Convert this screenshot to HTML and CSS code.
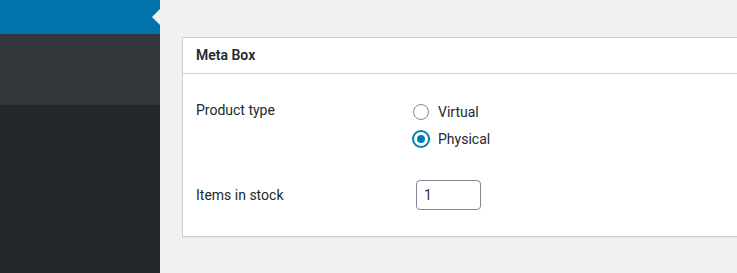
FILE: index.html
```html
<!DOCTYPE html>
<html lang="en">
<head>
<meta charset="utf-8">
<title>Meta Box</title>
<link rel="stylesheet" href="styles.css">
</head>
<body>
<div class="layout">
  <aside class="sidebar">
    <div class="sidebar-current"></div>
    <div class="sidebar-submenu"></div>
    <div class="sidebar-rest"></div>
  </aside>
  <main class="main">
    <section class="postbox">
      <h2 class="postbox-title">Meta Box</h2>
      <div class="postbox-body">
        <div class="field-row field-row-top">
          <div class="field-label">Product type</div>
          <div class="field-control radio-list">
            <label class="radio-option"><input type="radio" name="ptype" class="radio"><span>Virtual</span></label>
            <label class="radio-option"><input type="radio" name="ptype" class="radio" checked><span>Physical</span></label>
          </div>
        </div>
        <div class="field-row field-row-center">
          <div class="field-label">Items in stock</div>
          <div class="field-control">
            <input type="text" class="text-input" value="1">
          </div>
        </div>
      </div>
    </section>
  </main>
</div>
</body>
</html>
```
FILE: styles.css
```css
* { box-sizing: border-box; }
html, body { margin: 0; padding: 0; }
body {
  background: #f1f1f1;
  color: #23282d;
  font-family: Roboto, "Liberation Sans", sans-serif;
  font-size: 14px;
  overflow: hidden;
}
.layout {
  display: flex;
  height: 273px;
}
.sidebar {
  width: 160px;
  flex: none;
  display: flex;
  flex-direction: column;
}
.sidebar-current {
  height: 34px;
  background: #0073aa;
  position: relative;
}
.sidebar-current::after {
  content: "";
  position: absolute;
  right: 0;
  top: 9px;
  border-style: solid;
  border-width: 8px 8px 8px 0;
  border-color: transparent #f1f1f1 transparent transparent;
}
.sidebar-submenu {
  height: 71px;
  background: #32373c;
}
.sidebar-rest {
  flex: 1;
  background: #23282d;
}
.main {
  flex: 1;
  min-width: 0;
  overflow: hidden;
  padding: 37px 0 0 22px;
}
.postbox {
  margin-right: -20px;
  background: #fff;
  border: 1px solid #ccd0d4;
  box-shadow: 0 1px 1px rgba(0,0,0,.04);
}
.postbox-title {
  margin: 0;
  height: 36px;
  line-height: 35px;
  padding: 0 13px;
  font-size: 14px;
  font-weight: 600;
  border-bottom: 1px solid #ccd0d4;
}
.postbox-body {
  padding: 26px 0 26px 13px;
  display: flex;
  flex-direction: column;
  gap: 28px;
}
.field-row {
  display: flex;
}
.field-row-center { align-items: center; }
.field-label {
  width: 220px;
  flex: none;
  line-height: 20px;
}
.radio-list {
  display: flex;
  flex-direction: column;
  gap: 1px;
  margin: -1px 0 0 -3px;
}
.radio-option {
  display: flex;
  align-items: center;
  height: 26px;
  gap: 9px;
}
.radio {
  appearance: none;
  -webkit-appearance: none;
  margin: 0;
  width: 16px;
  height: 16px;
  border-radius: 50%;
  border: 1px solid #7e8993;
  background: #fff;
  display: grid;
  place-items: center;
}
.radio:checked {
  border-color: #007cba;
  box-shadow: 0 0 0 1px #007cba;
}
.radio:checked::before {
  content: "";
  width: 8px;
  height: 8px;
  border-radius: 50%;
  background: #007cba;
}
.text-input {
  width: 65px;
  height: 30px;
  border: 1px solid #7e8993;
  border-radius: 4px;
  padding: 0 7px;
  font: inherit;
  color: #32373c;
  background: #fff;
}
```
